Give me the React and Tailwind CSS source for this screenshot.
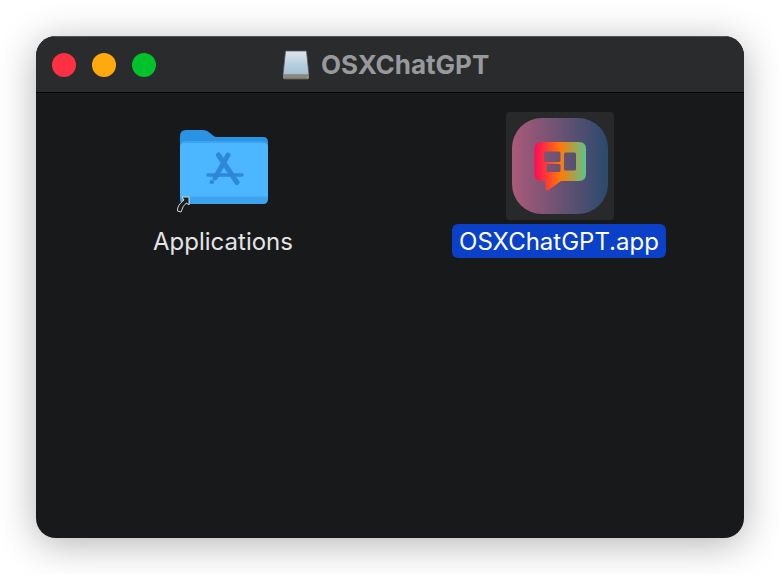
const font = { fontFamily: 'Inter, "Liberation Sans", sans-serif' };

function DiskIcon() {
  return (
    <svg width="30" height="32" viewBox="281 46 30 32" className="shrink-0">
      <defs>
        <linearGradient id="disk" x1="0" y1="0" x2="0" y2="1">
          <stop offset="0" stopColor="#dfe6ec" />
          <stop offset="0.55" stopColor="#b8cfe0" />
          <stop offset="1" stopColor="#a5bfd3" />
        </linearGradient>
      </defs>
      <path d="M285.500 48h21l2.500 24H283z" fill="url(#disk)" stroke="#55585c" strokeWidth="0.8" />
      <path d="M283 72h26v2.500q0 1.500-1.500 1.500h-23q-1.500 0-1.500-1.500z" fill="#8d8779" />
      <rect x="284" y="75.500" width="24" height="1" fill="#5f5c54" />
      <rect x="306.500" y="74" width="1.500" height="1.200" fill="#63d26a" />
    </svg>
  );
}

function FolderIcon() {
  return (
    <svg width="108" height="108" viewBox="169 112 108 108">
      <path d="M180 136q0-6 6-6h17q3 0 5 1.500l5 4q2 1.500 4 1.500h46q5 0 5 5v20h-88z" fill="#2b93e4" />
      <path d="M180 147q0-6 6-6h76q6 0 6 6v52q0 5-5 5h-78q-5 0-5-5z" fill="#3ea3ee" />
      <path d="M180 148q0-5 5-5h78q5 0 5 5v49h-88z" fill="#4cb7ff" />
      <rect x="180" y="196" width="88" height="1.500" fill="#45aaf7" />
      <g stroke="#2f87da" strokeLinecap="round" fill="none">
        <path d="M218.500 155l18.500 27.500" strokeWidth="5" />
        <path d="M228 155l-13 23" strokeWidth="5" />
        <path d="M208 175h34" strokeWidth="3.500" />
        <path d="M211.500 182h0.500" strokeWidth="4" />
      </g>
      <path d="M182 197H189V205L186.500 203Q183 205 181 212L177.500 211Q177 205 184 200Z" fill="#1d1e20" stroke="#e6e6e6" strokeWidth="0.9" strokeLinejoin="round" />
    </svg>
  );
}

function AppIcon() {
  return (
    <svg width="108" height="108" viewBox="506 112 108 108">
      <defs>
        <linearGradient id="bg" x1="0" y1="0" x2="1" y2="0">
          <stop offset="0" stopColor="#ab5a79" />
          <stop offset="1" stopColor="#2a4a6d" />
        </linearGradient>
        <linearGradient id="bubble" gradientUnits="userSpaceOnUse" x1="535" y1="0" x2="586" y2="0">
          <stop offset="0" stopColor="#ff0a58" />
          <stop offset="0.5" stopColor="#ff7a08" />
          <stop offset="1" stopColor="#5cc48c" />
        </linearGradient>
      </defs>
      <rect x="512" y="118" width="96" height="96" rx="30" fill="url(#bg)" />
      <path
        fillRule="evenodd"
        fill="url(#bubble)"
        d="M542 142h37q7 0 7 7v25q0 7-7 7h-18l-12.500 9q-2 1-3-1l-.5-8h-3.500q-7 0-7-7v-25q0-7 7-7z
           M545.500 151.500q-1.500 0-1.500 1.500v7.500q0 1.500 1.500 1.500h13.500q1.500 0 1.500-1.500v-7.500q0-1.500-1.500-1.500z
           M548 164q-1.500 0-1.500 1.500v5q0 1.500 1.500 1.500h11q1.500 0 1.500-1.500v-5q0-1.500-1.500-1.500z
           M565.500 152.500q-1.500 0-1.500 1.500v15q0 1.500 1.500 1.500h9q1.500 0 1.500-1.500v-15q0-1.500-1.500-1.500z"
      />
    </svg>
  );
}

export default function App() {
  return (
    <div className="h-[574px] w-[780px] bg-white px-9 pt-9" style={font}>
      <div className="h-[502px] w-[708px] overflow-hidden rounded-[20px] bg-[#18191b] shadow-[0_6px_38px_rgba(0,0,0,0.3)]">
        <div className="flex h-[57px] items-center border-b border-t border-b-black border-t-[#55565a] bg-[#2a2b2d] pl-4">
          <div className="flex gap-4">
            <div className="size-6 rounded-full bg-[#ff3044]" />
            <div className="size-6 rounded-full bg-[#ffa90f]" />
            <div className="size-6 rounded-full bg-[#00c32b]" />
          </div>
          <div className="ml-[125px] flex items-center gap-[10px]">
            <DiskIcon />
            <span className="text-[26px] leading-8 font-bold text-[#98999b]">OSXChatGPT</span>
          </div>
        </div>
        <div className="flex pl-[19px] pt-[19px]">
          <div className="flex w-[336px] flex-col items-center">
            <FolderIcon />
            <div className="mt-1 flex h-[34px] items-center px-2 pt-px text-[24px] leading-none text-[#e4e4e5]">Applications</div>
          </div>
          <div className="flex w-[336px] flex-col items-center">
            <div className="ml-0.5 size-[108px] rounded bg-[#28292b]">
              <AppIcon />
            </div>
            <div className="mt-1 flex h-[34px] items-center rounded-[6px] bg-[#0a41c8] px-[7px] pt-px text-[24px] leading-none text-white">OSXChatGPT.app</div>
          </div>
        </div>
      </div>
    </div>
  );
}
